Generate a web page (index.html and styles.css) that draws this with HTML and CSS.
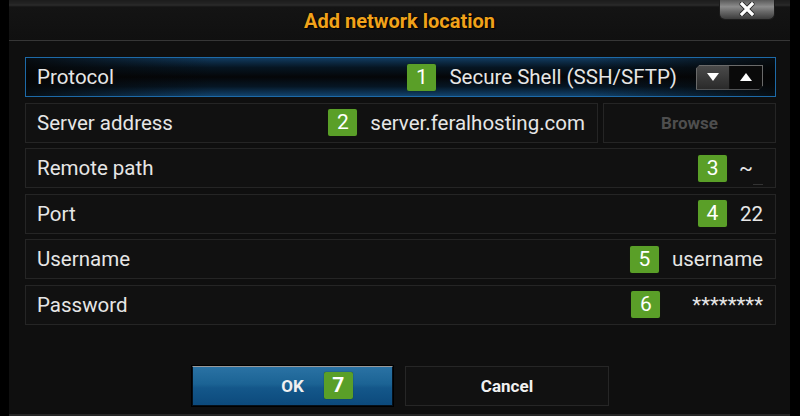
FILE: index.html
```html
<!DOCTYPE html>
<html>
<head>
<meta charset="utf-8">
<link rel="stylesheet" href="styles.css">
</head>
<body>
<div class="dialog">
  <div class="header">
    <div class="title">Add network location</div>
    <div class="close"><svg width="18" height="14" viewBox="0 0 18 14"><path d="M4 2L14 12M14 2L4 12" stroke="#222" stroke-width="5" stroke-linecap="round"/><path d="M4 2L14 12M14 2L4 12" stroke="#fff" stroke-width="3.2" stroke-linecap="square"/></svg></div>
  </div>
  <div class="form">
    <div class="row focused">
      <span class="label">Protocol</span>
      <span class="badge">1</span>
      <span class="value">Secure Shell (SSH/SFTP)</span>
      <span class="spin">
        <span class="spin-down"><svg width="12" height="8" viewBox="0 0 12 8"><path d="M0 0H12L6 8Z" fill="#fff"/></svg></span>
        <span class="spin-up"><svg width="12" height="8" viewBox="0 0 12 8"><path d="M0 8H12L6 0Z" fill="#fff"/></svg></span>
      </span>
    </div>
    <div class="row-split">
      <div class="row grow">
        <span class="label">Server address</span>
        <span class="badge">2</span>
        <span class="value">server.feralhosting.com</span>
      </div>
      <div class="browse">Browse</div>
    </div>
    <div class="row">
      <span class="label">Remote path</span>
      <span class="badge">3</span>
      <span class="value tilde">~<span class="cursor"></span></span>
    </div>
    <div class="row">
      <span class="label">Port</span>
      <span class="badge">4</span>
      <span class="value">22</span>
    </div>
    <div class="row">
      <span class="label">Username</span>
      <span class="badge">5</span>
      <span class="value">username</span>
    </div>
    <div class="row">
      <span class="label">Password</span>
      <span class="badge">6</span>
      <span class="value stars">********</span>
    </div>
  </div>
  <div class="footer">
    <div class="btn ok"><span class="btn-text">OK</span><span class="badge btn-badge">7</span></div>
    <div class="btn cancel"><span class="btn-text">Cancel</span></div>
  </div>
</div>
</body>
</html>
```

FILE: styles.css
```css
html, body {
  margin: 0;
  padding: 0;
  background: #000;
  width: 800px;
  height: 416px;
  overflow: hidden;
  font-family: Roboto, "Liberation Sans", sans-serif;
}

.dialog {
  position: relative;
  margin-left: 9px;
  width: 781px;
  height: 414px;
  background: #0f0f0f;
  border-bottom: 2px solid #262626;
  display: flex;
  flex-direction: column;
}

.header {
  position: relative;
  height: 40px;
  border-bottom: 1px solid #363636;
  background: linear-gradient(to bottom, #1c1c1c 0, #242424 4px, #2c2c2c 5px, #141414 7px, #101010 100%);
  display: flex;
  align-items: center;
  justify-content: center;
}

.title {
  color: #f0a21a;
  font-weight: bold;
  font-size: 20px;
  text-shadow: 1px 1px 1px #000, 0 0 2px #000;
  margin-top: 1px;
}

.close {
  position: absolute;
  top: 0;
  right: 15px;
  width: 56px;
  height: 20px;
  border: 1px solid #1c1c1c;
  border-top: none;
  border-radius: 0 0 6px 6px;
  background: linear-gradient(to bottom, #5a5a5a 0, #8c8c8c 35%, #6a6a6a 60%, #3c3c3c 100%);
  box-sizing: border-box;
  display: flex;
  align-items: center;
  justify-content: center;
  padding-bottom: 1px;
}

.form {
  padding: 16px 14px 0 16px;
  display: flex;
  flex-direction: column;
  gap: 5.5px;
}

.row {
  height: 40px;
  box-sizing: border-box;
  border: 1px solid #252525;
  background: #111;
  display: flex;
  align-items: center;
  padding: 0 12px 0 11px;
  color: #e6e6e6;
  font-size: 20.5px;
}

.row.focused {
  border-color: #1d6aa8;
  background:
    linear-gradient(to right, rgba(5,5,5,0.85) 0, rgba(5,5,5,0) 25%, rgba(5,5,5,0) 75%, rgba(5,5,5,0.85) 100%),
    linear-gradient(to bottom, #113a5e 0, #061522 25%, #050608 50%, #061624 75%, #11426c 100%);
}

.label {
  flex: 1;
}

.badge {
  width: 29px;
  height: 27px;
  background: #5a9f28;
  border-radius: 2px;
  color: #fff;
  font-size: 21px;
  line-height: 27px;
  text-align: center;
  box-shadow: 0 0 1px #1a3a08;
}

.value {
  margin-left: 13px;
  white-space: nowrap;
}

.spin {
  margin-left: 19px;
  display: flex;
  height: 23px;
  border: 1px solid #6a6a6a;
  clip-path: polygon(4px 0, 100% 0, 100% calc(100% - 4px), calc(100% - 4px) 100%, 0 100%, 0 4px);
  background: #6a6a6a;
}

.spin-down, .spin-up {
  width: 32px;
  height: 23px;
  display: flex;
  align-items: center;
  justify-content: center;
}

.spin-down {
  background: linear-gradient(to bottom, #4a4a4a 0, #3a3a3a 50%, #2a2a2a 100%);
  border-right: 1px solid #111;
}

.spin-up {
  background: #0a0a0a;
}

.row-split {
  display: flex;
  gap: 5px;
}

.grow {
  flex: 1;
}

.browse {
  width: 173px;
  height: 40px;
  box-sizing: border-box;
  border: 1px solid #252525;
  background: #111;
  color: #4e4e4e;
  font-weight: bold;
  font-size: 17px;
  display: flex;
  align-items: center;
  justify-content: center;
}

.tilde {
  position: relative;
  padding-right: 10px;
  margin-left: 12px;
}

.cursor {
  position: absolute;
  right: 0;
  bottom: -5px;
  width: 10px;
  height: 1px;
  background: #333;
}

.stars {
  margin-left: 32px;
}

.footer {
  margin-top: 41px;
  display: flex;
  justify-content: center;
  gap: 12px;
  padding-left: 2px;
}

.btn {
  width: 201px;
  height: 40px;
  box-sizing: border-box;
  display: flex;
  align-items: center;
  justify-content: center;
  color: #f0f0f0;
  font-weight: bold;
  font-size: 17px;
}

.ok {
  border: 1px solid #05101a;
  border-top-color: #9a9a9a;
  background:
    linear-gradient(to bottom, #2a72a4 0, #1b6394 45%, #14578a 55%, #0c4a7c 100%);
  box-shadow: 0 0 0 1px #000;
  gap: 20px;
  padding-left: 49px;
}

.btn-badge {
  width: 29px;
  height: 27px;
}

.cancel {
  width: 204px;
  border: 1px solid #262626;
  background: #111;
}
```
